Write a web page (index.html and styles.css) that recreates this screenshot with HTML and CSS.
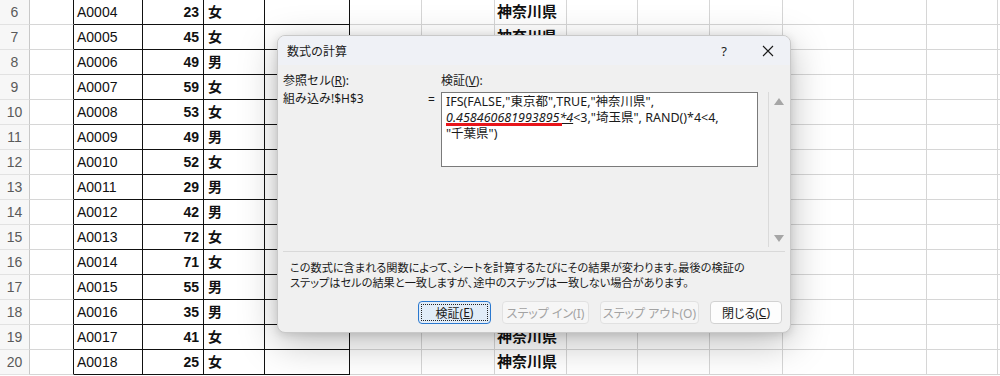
FILE: index.html
```html
<!DOCTYPE html>
<html lang="ja">
<head>
<meta charset="utf-8">
<title>数式の計算</title>
<link rel="stylesheet" href="styles.css">
</head>
<body>
<div class="sheet">
  <div class="row"><div class="c hd">6</div><div class="c ca"></div><div class="c cb">A0004</div><div class="c cc">23</div><div class="c cd">女</div><div class="c ce"></div><div class="c"></div><div class="c"></div><div class="c ch">神奈川県</div><div class="c"></div><div class="c"></div><div class="c"></div><div class="c"></div><div class="c"></div><div class="c"></div><div class="c last"></div></div>
  <div class="row"><div class="c hd">7</div><div class="c ca"></div><div class="c cb">A0005</div><div class="c cc">45</div><div class="c cd">女</div><div class="c ce"></div><div class="c"></div><div class="c"></div><div class="c ch">神奈川県</div><div class="c"></div><div class="c"></div><div class="c"></div><div class="c"></div><div class="c"></div><div class="c"></div><div class="c last"></div></div>
  <div class="row"><div class="c hd">8</div><div class="c ca"></div><div class="c cb">A0006</div><div class="c cc">49</div><div class="c cd">男</div><div class="c ce"></div><div class="c"></div><div class="c"></div><div class="c ch"></div><div class="c"></div><div class="c"></div><div class="c"></div><div class="c"></div><div class="c"></div><div class="c"></div><div class="c last"></div></div>
  <div class="row"><div class="c hd">9</div><div class="c ca"></div><div class="c cb">A0007</div><div class="c cc">59</div><div class="c cd">女</div><div class="c ce"></div><div class="c"></div><div class="c"></div><div class="c ch"></div><div class="c"></div><div class="c"></div><div class="c"></div><div class="c"></div><div class="c"></div><div class="c"></div><div class="c last"></div></div>
  <div class="row"><div class="c hd">10</div><div class="c ca"></div><div class="c cb">A0008</div><div class="c cc">53</div><div class="c cd">女</div><div class="c ce"></div><div class="c"></div><div class="c"></div><div class="c ch"></div><div class="c"></div><div class="c"></div><div class="c"></div><div class="c"></div><div class="c"></div><div class="c"></div><div class="c last"></div></div>
  <div class="row"><div class="c hd">11</div><div class="c ca"></div><div class="c cb">A0009</div><div class="c cc">49</div><div class="c cd">男</div><div class="c ce"></div><div class="c"></div><div class="c"></div><div class="c ch"></div><div class="c"></div><div class="c"></div><div class="c"></div><div class="c"></div><div class="c"></div><div class="c"></div><div class="c last"></div></div>
  <div class="row"><div class="c hd">12</div><div class="c ca"></div><div class="c cb">A0010</div><div class="c cc">52</div><div class="c cd">女</div><div class="c ce"></div><div class="c"></div><div class="c"></div><div class="c ch"></div><div class="c"></div><div class="c"></div><div class="c"></div><div class="c"></div><div class="c"></div><div class="c"></div><div class="c last"></div></div>
  <div class="row"><div class="c hd">13</div><div class="c ca"></div><div class="c cb">A0011</div><div class="c cc">29</div><div class="c cd">男</div><div class="c ce"></div><div class="c"></div><div class="c"></div><div class="c ch"></div><div class="c"></div><div class="c"></div><div class="c"></div><div class="c"></div><div class="c"></div><div class="c"></div><div class="c last"></div></div>
  <div class="row"><div class="c hd">14</div><div class="c ca"></div><div class="c cb">A0012</div><div class="c cc">42</div><div class="c cd">男</div><div class="c ce"></div><div class="c"></div><div class="c"></div><div class="c ch"></div><div class="c"></div><div class="c"></div><div class="c"></div><div class="c"></div><div class="c"></div><div class="c"></div><div class="c last"></div></div>
  <div class="row"><div class="c hd">15</div><div class="c ca"></div><div class="c cb">A0013</div><div class="c cc">72</div><div class="c cd">女</div><div class="c ce"></div><div class="c"></div><div class="c"></div><div class="c ch"></div><div class="c"></div><div class="c"></div><div class="c"></div><div class="c"></div><div class="c"></div><div class="c"></div><div class="c last"></div></div>
  <div class="row"><div class="c hd">16</div><div class="c ca"></div><div class="c cb">A0014</div><div class="c cc">71</div><div class="c cd">女</div><div class="c ce"></div><div class="c"></div><div class="c"></div><div class="c ch"></div><div class="c"></div><div class="c"></div><div class="c"></div><div class="c"></div><div class="c"></div><div class="c"></div><div class="c last"></div></div>
  <div class="row"><div class="c hd">17</div><div class="c ca"></div><div class="c cb">A0015</div><div class="c cc">55</div><div class="c cd">男</div><div class="c ce"></div><div class="c"></div><div class="c"></div><div class="c ch"></div><div class="c"></div><div class="c"></div><div class="c"></div><div class="c"></div><div class="c"></div><div class="c"></div><div class="c last"></div></div>
  <div class="row"><div class="c hd">18</div><div class="c ca"></div><div class="c cb">A0016</div><div class="c cc">35</div><div class="c cd">男</div><div class="c ce"></div><div class="c"></div><div class="c"></div><div class="c ch"></div><div class="c"></div><div class="c"></div><div class="c"></div><div class="c"></div><div class="c"></div><div class="c"></div><div class="c last"></div></div>
  <div class="row"><div class="c hd">19</div><div class="c ca"></div><div class="c cb">A0017</div><div class="c cc">41</div><div class="c cd">女</div><div class="c ce"></div><div class="c"></div><div class="c"></div><div class="c ch">神奈川県</div><div class="c"></div><div class="c"></div><div class="c"></div><div class="c"></div><div class="c"></div><div class="c"></div><div class="c last"></div></div>
  <div class="row"><div class="c hd">20</div><div class="c ca"></div><div class="c cb">A0018</div><div class="c cc">25</div><div class="c cd">女</div><div class="c ce"></div><div class="c"></div><div class="c"></div><div class="c ch">神奈川県</div><div class="c"></div><div class="c"></div><div class="c"></div><div class="c"></div><div class="c"></div><div class="c"></div><div class="c last"></div></div>
</div>

<div class="dialog">
  <div class="titlebar">
    <span class="title">数式の計算</span>
    <span class="help">?</span>
    <svg class="close" width="12" height="12" viewBox="0 0 12 12"><path d="M1 1L11 11M11 1L1 11" stroke="#1a1a1a" stroke-width="1.1" fill="none"/></svg>
  </div>
  <div class="body">
    <div class="eval-row">
      <div class="ref-col">
        <div class="lbl">参照セル(<u>R</u>):</div>
        <div class="val">組み込み!$H$3</div>
      </div>
      <div class="eq">=</div>
      <div class="eval-col">
        <div class="lbl">検証(<u>V</u>):</div>
        <div class="eval-area">
          <div class="formula">IFS(FALSE,"東京都",TRUE,"神奈川県",<br><span class="hl">0.458460681993895*4</span>&lt;3,"埼玉県", RAND()*4&lt;4,<br>"千葉県")</div>
          <div class="scroll">
            <svg width="10" height="7" viewBox="0 0 10 7"><path d="M5 0L10 7H0Z" fill="#a6a6a6"/></svg>
            <svg width="10" height="7" viewBox="0 0 10 7"><path d="M0 0H10L5 7Z" fill="#a6a6a6"/></svg>
          </div>
        </div>
      </div>
    </div>
    <div class="sep"></div>
    <p class="note">この数式に含まれる関数によって、シートを計算するたびにその結果が変わります。最後の検証の<br>ステップはセルの結果と一致しますが、途中のステップは一致しない場合があります。</p>
    <div class="buttons">
      <button class="btn default"><span class="focus">検証(<u>E</u>)</span></button>
      <button class="btn disabled w87">ステップ イン(I)</button>
      <button class="btn disabled w99">ステップ アウト(O)</button>
      <button class="btn w72">閉じる(<u>C</u>)</button>
    </div>
  </div>
</div>
</body>
</html>
```

FILE: styles.css
```css
* { box-sizing: border-box; }
html, body { margin: 0; padding: 0; }
body {
  width: 1000px;
  height: 376px;
  overflow: hidden;
  background: #fff;
  position: relative;
  font-family: "Liberation Sans", "Noto Sans CJK JP", sans-serif;
}

.sheet { display: flex; flex-direction: column; }
.row {
  display: grid;
  grid-template-columns: 30px 44px 69px 61px 61px 85px 72px 73px 72px 71px 72px 73px 71px 73px 71px 1fr;
  height: 25px;
}
.c {
  height: 25px;
  border-right: 1px solid #d6d6d6;
  border-bottom: 1px solid #d6d6d6;
  font-size: 14px;
  line-height: 24px;
  color: #111;
  white-space: nowrap;
  overflow: hidden;
}
.c.last { border-right: none; }
.c.hd {
  background: #f7f7f7;
  color: #5a5a5a;
  text-align: center;
  border-right-color: #c8c8c8;
  border-bottom-color: #e2e2e2;
  font-size: 14px;
}
.c.ca { border-right-color: #111; }
.c.cb, .c.cc, .c.cd, .c.ce {
  border-right-color: #111;
  border-bottom-color: #111;
}
.c.cb { padding-left: 3px; }
.c.cc { text-align: right; padding-right: 4px; font-weight: bold; }
.c.cd { padding-left: 4px; font-weight: bold; }
.c.ch { padding-left: 2px; font-weight: bold; font-size: 15px; }

.dialog {
  position: absolute;
  left: 277px;
  top: 35px;
  width: 514px;
  height: 298px;
  background: #f0f0f0;
  border: 1px solid #c9c9c9;
  border-radius: 8px;
  box-shadow: 0 10px 38px rgba(0,0,0,0.26), 0 2px 8px rgba(0,0,0,0.12);
  font-family: "Noto Sans", "Noto Sans CJK JP", sans-serif;
  font-size: 12px;
  color: #1a1a1a;
  overflow: hidden;
}
.titlebar {
  height: 29px;
  background: #eff1f6;
  display: flex;
  align-items: center;
  padding-left: 9px;
}
.title { font-size: 12px; flex: 1; }
.help { font-size: 13px; width: 14px; margin-right: 31px; text-align: center; }
.close { margin-right: 16px; }

.body { padding: 9px 2px 8px 5px; }
.eval-row { display: flex; }
.lbl { height: 14px; line-height: 14px; margin-bottom: 4px; white-space: nowrap; }
.ref-col { width: 145px; flex: none; }
.val { line-height: 14px; }
.eq { width: 13px; flex: none; padding-top: 19px; line-height: 14px; }
.eval-col { width: 347px; flex: none; }
.eval-area { display: flex; height: 155px; }
.formula {
  width: 317px;
  height: 75px;
  flex: none;
  background: #fff;
  border: 1px solid #7a7a7a;
  padding: 1px 4px;
  font-size: 12.5px;
  line-height: 16px;
  white-space: nowrap;
  overflow: hidden;
}
.hl {
  position: relative;
  font-style: italic;
  text-decoration: underline;
  text-underline-offset: 1px;
}
.hl::after {
  content: "";
  position: absolute;
  left: 0;
  top: 14px;
  width: 116px;
  height: 3px;
  background: #e8161b;
}
.scroll {
  margin-left: 10px;
  width: 20px;
  flex: none;
  border-left: 1px solid #dadada;
  display: flex;
  flex-direction: column;
  justify-content: space-between;
  align-items: center;
  padding: 6px 0 5px 0;
}
.sep { height: 1px; background: #d9d9d9; margin: 4px 3px 0 0; }
.note {
  margin: 8px 0 0 0;
  padding-left: 7px;
  line-height: 15px;
  font-size: 11.2px;
  font-feature-settings: "palt";
  white-space: nowrap;
}
.buttons {
  display: flex;
  justify-content: flex-end;
  gap: 11px;
  margin-top: 11px;
  padding-right: 6px;
}
.btn {
  height: 23px;
  font-family: inherit;
  font-size: 12px;
  font-feature-settings: "palt";
  white-space: nowrap;
  background: #fdfdfd;
  border: 1px solid #d2d2d2;
  border-radius: 4px;
  color: #1a1a1a;
  padding: 0;
  display: flex;
  align-items: center;
  justify-content: center;
  flex: none;
}
.btn.default {
  width: 73px;
  background: #e1ecf8;
  border: 1px solid #2a78cf;
  padding: 2px;
}
.focus {
  width: 100%;
  height: 100%;
  border: 1px dotted #222;
  display: flex;
  align-items: center;
  justify-content: center;
}
.btn.disabled { color: #a3a3a3; background: #f6f6f6; border-color: #e1e1e1; }
.w87 { width: 87px; }
.w99 { width: 99px; }
.w72 { width: 72px; }
```
